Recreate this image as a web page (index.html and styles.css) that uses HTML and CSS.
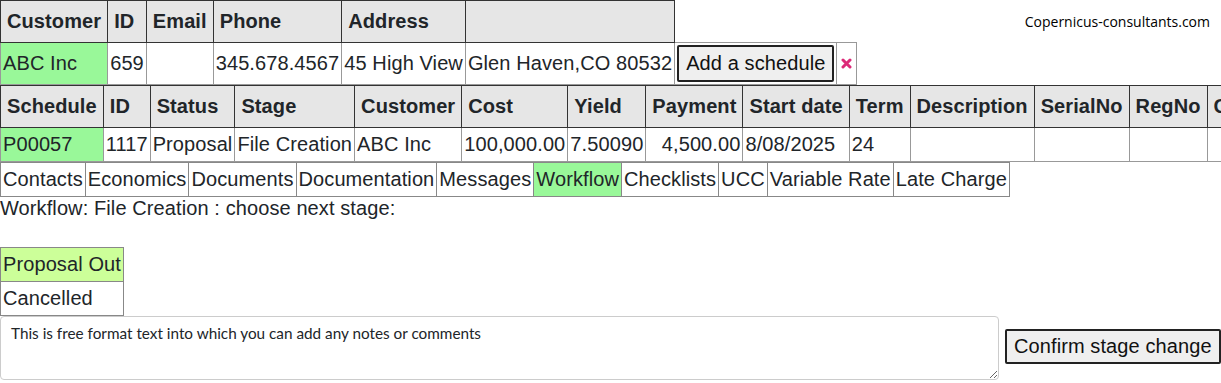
FILE: index.html
```html
<!DOCTYPE html>
<html lang="en">
<head>
    <meta charset="UTF-8">
    <title>Schedule workflow</title>
    <link rel="stylesheet" href="styles.css">
</head>
<body>

    <div class="top">
        <table class="grid customer">
            <tr>
                <th>Customer</th>
                <th>ID</th>
                <th>Email</th>
                <th>Phone</th>
                <th>Address</th>
                <th></th>
            </tr>
            <tr>
                <td class="hit">ABC Inc</td>
                <td>659</td>
                <td></td>
                <td>345.678.4567</td>
                <td>45 High View</td>
                <td>Glen Haven,CO 80532</td>
                <td class="tight"><button class="btn">Add a schedule</button></td>
                <td class="tight">
                    <svg class="remove" width="11" height="11" viewBox="0 0 11 11">
                        <path d="M2 2 L9 9 M9 2 L2 9" stroke="#dc2a78" stroke-width="3" stroke-linecap="round"/>
                    </svg>
                </td>
            </tr>
        </table>
        <div class="brand">Copernicus-consultants.com</div>
    </div>

    <div class="clip">
        <table class="grid schedule">
            <tr>
                <th>Schedule</th>
                <th>ID</th>
                <th>Status</th>
                <th>Stage</th>
                <th>Customer</th>
                <th>Cost</th>
                <th>Yield</th>
                <th>Payment</th>
                <th>Start date</th>
                <th>Term</th>
                <th>Description</th>
                <th>SerialNo</th>
                <th>RegNo</th>
                <th>Colour</th>
            </tr>
            <tr>
                <td class="hit">P00057</td>
                <td>1117</td>
                <td>Proposal</td>
                <td>File Creation</td>
                <td>ABC Inc</td>
                <td class="num">100,000.00</td>
                <td class="num">7.50090</td>
                <td class="num">4,500.00</td>
                <td>8/08/2025</td>
                <td>24</td>
                <td></td>
                <td></td>
                <td></td>
                <td></td>
            </tr>
        </table>
    </div>

    <table class="tabs">
        <tr>
            <td>Contacts</td>
            <td>Economics</td>
            <td>Documents</td>
            <td>Documentation</td>
            <td>Messages</td>
            <td class="on">Workflow</td>
            <td>Checklists</td>
            <td>UCC</td>
            <td>Variable Rate</td>
            <td>Late Charge</td>
        </tr>
    </table>

    <p class="prompt">Workflow: File Creation : choose next stage:</p>

    <table class="stages">
        <tr><td class="pick">Proposal Out</td></tr>
        <tr><td>Cancelled</td></tr>
    </table>

    <div class="notes">
        <textarea class="comment">This is free format text into which you can add any notes or comments</textarea>
        <button class="btn">Confirm stage change</button>
    </div>

</body>
</html>
```

FILE: styles.css
```css
body {
    margin: 0;
    font-family: "Liberation Sans", Arial, sans-serif;
    font-size: 20px;
    letter-spacing: 0.1px;
    color: #212529;
    background-color: #fff;
}
table {
    border-collapse: collapse;
    font-size: 20px;
}
.top {
    display: flex;
    align-items: flex-start;
    justify-content: space-between;
}
.grid th {
    background-color: #e6e6e6;
    border: 1px solid #333;
    padding: 9px 6px;
    text-align: left;
    font-weight: bold;
    white-space: nowrap;
}
.grid td {
    border: 1px solid #999;
    padding: 5px 2px;
    white-space: nowrap;
}
.grid td.tight {
    padding: 2px 2px;
}
.grid td.num {
    text-align: right;
}
.hit {
    background-color: #99f899;
}
.btn {
    font-family: "Liberation Sans", Arial, sans-serif;
    font-size: 20px;
    letter-spacing: 0.1px;
    white-space: nowrap;
    color: #111;
    background-color: #efefef;
    border: 2px solid #222;
    border-radius: 2px;
    padding: 5px 7px;
}
.remove {
    display: block;
    margin: 0 2px;
}
.brand {
    font-family: "Open Sans", sans-serif;
    font-size: 14px;
    letter-spacing: 0;
    color: #000;
    margin: 12px 11px 0 0;
}
.clip {
    overflow: hidden;
}
.tabs td {
    border: 1px solid #888;
    padding: 5px 2px;
    white-space: nowrap;
}
.tabs td.on {
    background-color: #99f899;
}
.prompt {
    margin: 0 0 27px;
    line-height: 23px;
}
.stages td {
    border: 1px solid #888;
    padding: 5px 2px;
    white-space: nowrap;
}
.stages td.pick {
    background-color: #ccff99;
}
.notes {
    display: flex;
    align-items: flex-start;
    gap: 6px;
}
.comment {
    flex: none;
    width: 999px;
    height: 64px;
    box-sizing: border-box;
    border: 1px solid #ccc;
    border-radius: 4px;
    padding: 7px 10px;
    font-family: Lato, sans-serif;
    font-size: 15.3px;
    letter-spacing: 0;
    color: #212529;
}
.notes .btn {
    flex: none;
    margin-top: 13px;
    padding: 4px 7px;
}
```
